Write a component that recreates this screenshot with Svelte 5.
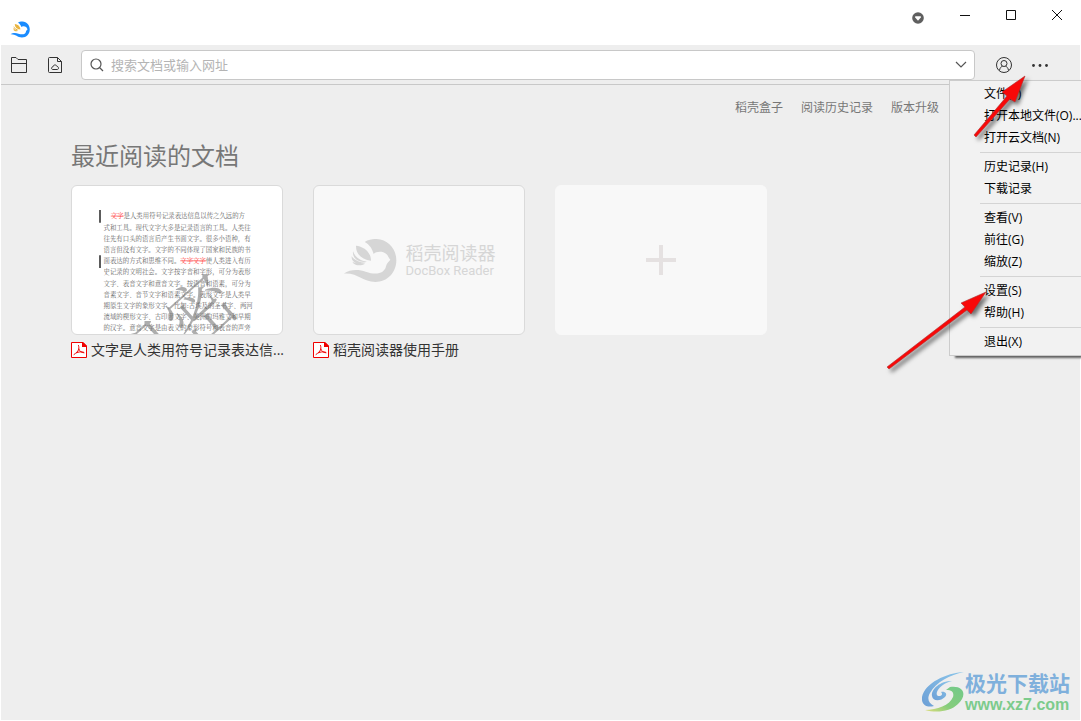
<script lang="ts">
    let query = $state("");

    const links = ["稻壳盒子", "阅读历史记录", "版本升级"];

    const menu = [
        ["文件(F)", "打开本地文件(O)...", "打开云文档(N)"],
        ["历史记录(H)", "下载记录"],
        ["查看(V)", "前往(G)", "缩放(Z)"],
        ["设置(S)", "帮助(H)"],
        ["退出(X)"],
    ];

    const pageLines = [
        "式和工具。现代文字大多是记录语言的工具。人类往",
        "往先有口头的语言后产生书面文字。很多小语种，有",
        "语言但没有文字。文字的不同体现了国家和民族的书",
        "",
        "史记录的文明社会。文字按字音和字形，可分为表形",
        "文字、表音文字和意音文字。按语音和语素，可分为",
        "音素文字、音节文字和语素文字。表形文字是人类早",
        "期原生文字的象形文字，比如:古埃及的圣书字、两河",
        "流域的楔形文字、古印度文字、美洲的玛雅文和早期",
        "的汉字。意音文字是由表义的象形符号和表音的声旁",
    ];
</script>

{#snippet bird(cls: string)}
    <svg class={cls} viewBox="12 24 162 135" aria-hidden="true">
        <path
            class="body"
            d="M77 36C90 27 104 26 113 27C148 29 172 57 172 91C172 128 145 156 109 156C70 156 58 128 14 131C34 117 60 118 80 125C112 137 137 130 141 109C142 101 148 97 154 89C148 84 149 78 142 72C130 62 110 65 104 72C100 57 92 44 77 36Z"
        />
        <path
            class="wing"
            d="M51 47C73 49 96 65 96 92C70 89 50 74 51 47ZM42 64C47 79 62 92 84 95C64 99 39 88 42 64ZM38 79C47 91 62 98 81 98C62 106 36 100 38 79ZM40 95C52 100 65 102 78 101C65 109 47 108 40 95Z"
        />
    </svg>
{/snippet}

{#snippet pdf()}
    <svg class="pdf" viewBox="0 0 16 16" aria-hidden="true">
        <path d="M0.500 0.500H12L15.500 4V15.500H0.500Z" fill="#fff" stroke="#f00000" />
        <path d="M11 0H12L16 4V5H11Z" fill="#f00000" />
        <path
            d="M7.500 3.500C8.500 7 8 9 3 12.500M7.800 7C9 9.500 10 10.500 13 10.800M5.500 10.800C7.500 9.800 10 9.500 12.500 10.200"
            fill="none"
            stroke="#f00000"
            stroke-linecap="round"
        />
    </svg>
{/snippet}

<div class="window">
    <header class="titlebar">
        {@render bird("logo")}
        <div class="controls">
            <button class="skin" aria-label="皮肤">
                <svg width="12" height="12" viewBox="0 0 12 12">
                    <circle cx="6" cy="6" r="5.800" fill="#5f5f5f" />
                    <path d="M3.200 4.200H8.800V5.500L6 8.800L3.200 5.500Z" />
                </svg>
            </button>
            <button aria-label="最小化">
                <svg width="12" height="12" viewBox="0 0 12 12"><path d="M1 6.500H11" /></svg>
            </button>
            <button aria-label="最大化">
                <svg width="12" height="12" viewBox="0 0 12 12"><path d="M1.500 1.500H10.500V10.500H1.500Z" /></svg>
            </button>
            <button aria-label="关闭">
                <svg width="12" height="12" viewBox="0 0 12 12"><path d="M1 1L11 11M11 1L1 11" /></svg>
            </button>
        </div>
    </header>

    <div class="toolbar">
        <button class="tool" aria-label="打开本地文件">
            <svg width="18" height="18" viewBox="0 0 18 18">
                <path d="M1.500 16.500V1.500H6L8 3.500H16.500V16.500ZM1.500 7.500H16.500" />
            </svg>
        </button>
        <button class="tool" aria-label="打开云文档">
            <svg width="18" height="18" viewBox="0 0 18 18">
                <path d="M3.500 1.500H11.500L15.500 5.500V16.500H3.500Q2.500 16.500 2.500 15.500V2.500Q2.500 1.500 3.500 1.500ZM11.500 1.500V5.500H15.500" />
                <path d="M7 13.500C5 13.500 5 11 7 10.800C7.200 8.500 10.500 8.300 11 10.500C13 10.500 13 13.500 11.200 13.500Z" />
            </svg>
        </button>
        <div class="search">
            <svg width="14" height="14" viewBox="0 0 14 14">
                <circle cx="6" cy="6" r="5" />
                <path d="M9.500 9.500L13 13" />
            </svg>
            <input type="text" bind:value={query} placeholder="搜索文档或输入网址" aria-label="搜索文档或输入网址" />
            <button aria-label="展开">
                <svg width="12" height="8" viewBox="0 0 12 8"><path d="M1 1L6 6L11 1" /></svg>
            </button>
        </div>
        <button class="tool user" aria-label="用户">
            <svg width="18" height="18" viewBox="0 0 18 18">
                <circle cx="9" cy="9" r="7.500" />
                <circle cx="9" cy="7.500" r="3" />
                <path d="M4.500 14.500C4.800 11.800 6.300 10.500 7.500 10.300M10.500 10.300C11.700 10.500 13.200 11.800 13.500 14.500" />
            </svg>
        </button>
        <button class="tool more" aria-label="更多">
            <svg width="18" height="18" viewBox="0 0 18 18">
                <g fill="#333" stroke="none">
                    <circle cx="2.500" cy="9.500" r="1.400" />
                    <circle cx="9" cy="9.500" r="1.400" />
                    <circle cx="15.500" cy="9.500" r="1.400" />
                </g>
            </svg>
        </button>

        <div class="menu" role="menu">
            {#each menu as group, i}
                {#if i > 0}<hr />{/if}
                {#each group as item}
                    <button role="menuitem">{item}</button>
                {/each}
            {/each}
        </div>
    </div>

    <main>
        <nav>
            {#each links as link}
                <a href="#top">{link}</a>
            {/each}
        </nav>

        <h1>最近阅读的文档</h1>

        <div class="docs">
            <figure>
                <button class="card page" aria-label="文字是人类用符号记录表达信...">
                    <svg viewBox="0 0 525 370">
                        <path d="M70 60V92M70 173V205" stroke="#333" stroke-width="4" />
                        <text x="97" y="81"><tspan class="struck">文字</tspan>是人类用符号记录表达信息以传之久远的方</text>
                        {#each pageLines as line, i}
                            <text x="79" y={109 + i * 28}>{line}</text>
                        {/each}
                        <text x="79" y="193">面表达的方式和思维不同。<tspan class="struck">文字文字</tspan>使人类进入有历</text>
                        <text class="stamp" transform="translate(326 306) rotate(-42)" x="-258" y="62">机密</text>
                    </svg>
                </button>
                <figcaption>{@render pdf()}<span>文字是人类用符号记录表达信...</span></figcaption>
            </figure>

            <figure>
                <button class="card blank" aria-label="稻壳阅读器使用手册">
                    {@render bird("mark")}
                    <span class="brand">
                        <span class="cn">稻壳阅读器</span>
                        <span class="en">DocBox Reader</span>
                    </span>
                </button>
                <figcaption>{@render pdf()}<span>稻壳阅读器使用手册</span></figcaption>
            </figure>

            <button class="card add" aria-label="添加">
                <svg width="30" height="30" viewBox="0 0 30 30">
                    <path d="M15 0V30M0 15H30" stroke="#e5e1e1" stroke-width="4" />
                </svg>
            </button>
        </div>
    </main>

    <svg class="arrows" width="200" height="400" viewBox="881 0 200 400" aria-hidden="true">
        <path d="M1025 76L1002 92L1007 96L974 135L976 137L1010 99L1015 102Z" />
        <path d="M986 292L961 303L965 307L887 367L889 369L967 310L971 314Z" />
    </svg>

    <div class="site">
        <svg width="42" height="42" viewBox="0 0 42 42" aria-hidden="true">
            <defs>
                <linearGradient id="sky" x1="1" y1="0" x2="0" y2="1">
                    <stop offset="0" stop-color="#8cc6ea" />
                    <stop offset="1" stop-color="#6c9fd6" />
                </linearGradient>
                <linearGradient id="leaf" x1="1" y1="0" x2="0" y2="1">
                    <stop offset="0" stop-color="#72c98a" />
                    <stop offset="0.600" stop-color="#86cd7c" />
                    <stop offset="1" stop-color="#dedd7c" />
                </linearGradient>
            </defs>
            <path
                d="M42 0C24 1 3 11 0 25C-1 33 5 36 12 34C6 31 5 26 8 21C14 10 28 3 42 0Z"
                fill="url(#sky)"
            />
            <path
                d="M30 9C18 9 9 17 10 24C11 30 19 29 23 25C26 22 23 19 19 20C21 22 20 24 17 24C12 24 15 13 30 9Z"
                fill="url(#sky)"
            />
            <path
                d="M28 15C43 13 45 24 36 32C28 40 14 41 3 38C15 38 28 33 31 25C32 21 31 18 24 18Z"
                fill="url(#leaf)"
            />
        </svg>
        <div>
            <strong>极光下载站</strong>
            <span>www.xz7.com</span>
        </div>
    </div>
</div>

<style>
    :global(body) {
        background: #fff;
        font-family: "Open Sans", "Noto Sans CJK SC", sans-serif;
    }

    .window {
        position: relative;
        box-sizing: border-box;
        min-height: 100vh;
        padding: 0 1px 1px;
        display: flex;
        flex-direction: column;
        overflow: hidden;
    }

    button {
        padding: 0;
        border: 0;
        background: none;
        font: inherit;
        color: inherit;
        cursor: pointer;
    }

    svg {
        display: block;
        flex: none;
    }

    .titlebar {
        height: 45px;
        display: flex;
        justify-content: space-between;
        align-items: flex-start;
    }

    .logo {
        width: 20px;
        height: 17px;
        margin: 21px 0 0 9px;
    }

    .logo .body {
        fill: #1a8cff;
    }

    .logo .wing {
        fill: #e8b440;
    }

    .controls {
        display: flex;
    }

    .controls button {
        width: 46px;
        height: 30px;
        display: grid;
        place-items: center;
    }

    .controls .skin {
        height: 36px;
        margin-right: 1px;
    }

    .controls path {
        stroke: #111;
        fill: none;
    }

    .controls .skin path {
        stroke: none;
        fill: #fff;
    }

    .toolbar {
        position: relative;
        z-index: 1;
        display: flex;
        align-items: center;
        height: 39px;
        padding: 0 31px 0 9px;
        background: #eee;
        border-bottom: 1px solid #c8c8c8;
    }

    .tool {
        margin-right: 18px;
    }

    .tool svg {
        fill: none;
        stroke: #333;
    }

    .search {
        flex: 1;
        min-width: 0;
        height: 28px;
        margin-left: -1px;
        margin-top: 1px;
        padding: 0 7px 0 8px;
        display: flex;
        align-items: center;
        gap: 7px;
        background: #fff;
        border: 1px solid #c8c8c8;
        border-radius: 4px;
    }

    .search svg {
        fill: none;
        stroke: #555;
        stroke-width: 1.2;
    }

    .search input {
        flex: 1;
        min-width: 0;
        padding: 0;
        border: 0;
        outline: none;
        background: none;
        font-family: inherit;
        font-size: 13px;
        color: #333;
    }

    .search input::placeholder {
        color: #b4b4b4;
        opacity: 1;
    }

    .user {
        margin-left: 20px;
    }

    .more {
        margin-right: 0;
    }

    .menu {
        position: absolute;
        top: 35px;
        right: -1px;
        box-sizing: border-box;
        width: 132px;
        padding: 2px 0 2px 30px;
        border: 1px solid #ccc;
        border-right: 0;
        background: #f2f2f2;
        box-shadow: 6px 2px 2px rgba(0, 0, 0, 0.6);
    }

    .menu button {
        display: block;
        width: 100%;
        height: 22px;
        padding-left: 4px;
        line-height: 22px;
        text-align: left;
        white-space: nowrap;
        font-size: 12px;
        color: #000;
    }

    .menu hr {
        margin: 3px 0;
        border: 0;
        border-top: 1px solid #d4d4d4;
    }

    main {
        flex: 1;
        background: #eee;
        padding: 13px 70px 0;
    }

    nav {
        display: flex;
        justify-content: flex-end;
        gap: 18px;
        margin-right: 71px;
        font-size: 12px;
        line-height: 20px;
    }

    nav a {
        color: #777;
        text-decoration: none;
    }

    h1 {
        margin: 19px 0 10px;
        font-size: 24px;
        line-height: 38px;
        font-weight: 400;
        color: #777;
    }

    .docs {
        display: flex;
        align-items: flex-start;
        flex-wrap: wrap;
        gap: 30px;
    }

    figure {
        margin: 0;
        width: 212px;
    }

    .card {
        box-sizing: border-box;
        width: 212px;
        height: 150px;
        display: flex;
        align-items: center;
        justify-content: center;
        border: 1px solid #dadada;
        border-radius: 6px;
        background: #f8f8f8;
        overflow: hidden;
    }

    .card.page {
        background: #fff;
    }

    .card.add {
        border-color: #f8f8f8;
    }

    .page svg {
        width: 100%;
        height: 100%;
    }

    .page text {
        font-family: "Noto Serif CJK SC", "Noto Sans CJK SC", serif;
        font-size: 16px;
        fill: #666;
    }

    .page .struck {
        fill: #f33;
        text-decoration: line-through;
    }

    .page .stamp {
        font-size: 168px;
        font-weight: 300;
        fill: #777;
        fill-opacity: 0.6;
    }

    .blank {
        gap: 9px;
    }

    .mark {
        width: 54px;
        height: 45px;
        fill: #d6d6d6;
    }

    .brand {
        display: flex;
        flex-direction: column;
        padding-top: 2px;
        text-align: left;
        color: #d6d6d6;
    }

    .cn {
        font-size: 18px;
        line-height: 20px;
    }

    .en {
        font-family: Roboto, "Liberation Sans", sans-serif;
        font-size: 13px;
        line-height: 16px;
    }

    figcaption {
        display: flex;
        align-items: center;
        gap: 4px;
        margin-top: 5px;
        font-size: 14px;
        line-height: 20px;
        white-space: nowrap;
        color: #333;
    }

    .pdf {
        width: 16px;
        height: 16px;
    }

    .arrows {
        position: absolute;
        top: 0;
        right: 0;
        z-index: 2;
        pointer-events: none;
        fill: #f80808;
        stroke: #a33;
        stroke-width: 0.6;
        filter: drop-shadow(3px 3px 2px rgba(0, 0, 0, 0.55));
    }

    .site {
        position: absolute;
        right: 11px;
        bottom: 6px;
        display: flex;
        align-items: center;
        gap: 1px;
    }

    .site div {
        display: flex;
        flex-direction: column;
    }

    .site strong {
        font-size: 21px;
        line-height: 24px;
        font-weight: 700;
        color: #7fb0dc;
    }

    .site span {
        font-family: "Liberation Sans", Arial, sans-serif;
        font-size: 16px;
        line-height: 20px;
        font-weight: 700;
        color: #7ccb8c;
    }
</style>
